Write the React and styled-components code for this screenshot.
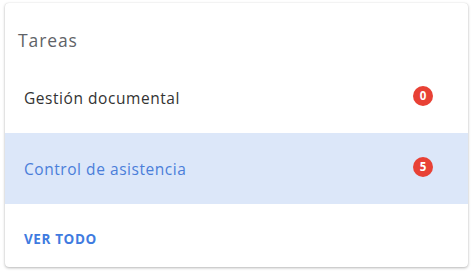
import React from "react";
import styled, { createGlobalStyle } from "styled-components";

const Global = createGlobalStyle`
  html, body { margin: 0; padding: 0; background: #ffffff; }
  body { font-family: "Open Sans", "Noto Sans", sans-serif; }
`;

const Page = styled.div`
  padding: 3px 7px 7px 5px;
`;

const Card = styled.div`
  width: 463px;
  height: 264px;
  background: #fff;
  border-radius: 4px;
  box-shadow: 0 1px 3px rgba(0, 0, 0, 0.28), 0 0 1px rgba(0, 0, 0, 0.12);
  display: flex;
  flex-direction: column;
  overflow: hidden;
`;

const Header = styled.div`
  height: 59px;
  box-sizing: border-box;
  padding: 15px 0 0 13px;
  display: flex;
  align-items: center;
  font-size: 17.5px;
  color: #5f6368;
  letter-spacing: 0.9px;
`;

const Row = styled.div`
  height: 71px;
  box-sizing: border-box;
  padding: 0 35px 0 19px;
  display: flex;
  align-items: center;
  justify-content: space-between;
  background: ${(p) => (p.$active ? "#dce7f9" : "transparent")};
  color: ${(p) => (p.$active ? "#4a7ed9" : "#333333")};
  font-size: 15.5px;
  letter-spacing: 0.55px;
`;

const Badge = styled.span`
  width: 20px;
  height: 20px;
  border-radius: 50%;
  background: #e84135;
  color: #fff;
  font-size: 11.5px;
  font-weight: 700;
  letter-spacing: 0;
  display: flex;
  align-items: center;
  justify-content: center;
  margin-top: ${(p) => p.$offset || 0}px;
`;

const Footer = styled.div`
  flex: 1;
  padding: 6px 19px 0;
  display: flex;
  align-items: center;
`;

const Link = styled.a`
  color: #3f7be0;
  font-weight: 700;
  font-size: 13.5px;
  letter-spacing: 0.6px;
  text-decoration: none;
  cursor: pointer;
`;

const tasks = [
  { name: "Gestión documental", count: 0 },
  { name: "Control de asistencia", count: 5, active: true },
];

export default function App() {
  return (
    <>
      <Global />
      <Page>
        <Card>
          <Header>Tareas</Header>
          {tasks.map((t) => (
            <Row key={t.name} $active={t.active}>
              <span>{t.name}</span>
              <Badge $offset={-4}>{t.count}</Badge>
            </Row>
          ))}
          <Footer>
            <Link>VER TODO</Link>
          </Footer>
        </Card>
      </Page>
    </>
  );
}
